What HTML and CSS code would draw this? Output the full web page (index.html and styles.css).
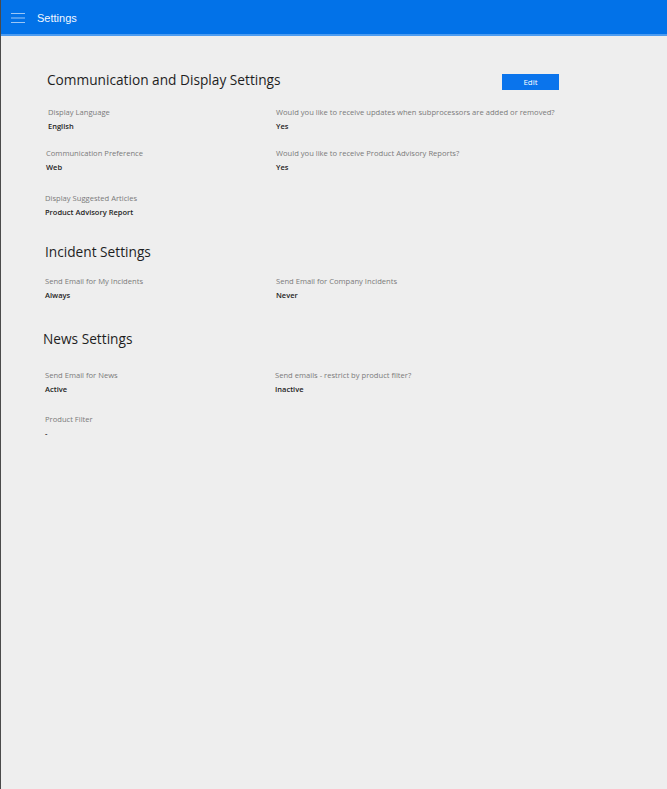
FILE: index.html
```html
<!DOCTYPE html>
<html lang="en">
<head>
<meta charset="utf-8">
<title>Settings</title>
<link rel="stylesheet" href="styles.css">
</head>
<body>
<header class="topbar">
  <svg class="menu-icon" width="14" height="12" viewBox="0 0 14 12" aria-hidden="true">
    <path d="M0 1.5H14M0 6H14M0 10.5H14" stroke="#9cc6f5" stroke-width="1.2" fill="none"/>
  </svg>
  <span class="topbar-title">Settings</span>
</header>
<main class="content">
  <section class="section section-comm">
    <div class="section-head">
      <h2 class="section-title title-comm">Communication and Display Settings</h2>
      <button class="edit-btn" type="button">Edit</button>
    </div>
    <div class="fields">
      <div class="field f-indent3"><div class="label">Display Language</div><div class="value">English</div></div>
      <div class="field"><div class="label">Would you like to receive updates when subprocessors are added or removed?</div><div class="value">Yes</div></div>
      <div class="field f-indent1"><div class="label">Communication Preference</div><div class="value">Web</div></div>
      <div class="field"><div class="label">Would you like to receive Product Advisory Reports?</div><div class="value">Yes</div></div>
      <div class="field field-extra"><div class="label">Display Suggested Articles</div><div class="value">Product Advisory Report</div></div>
    </div>
  </section>
  <section class="section section-incident">
    <h2 class="section-title">Incident Settings</h2>
    <div class="fields">
      <div class="field"><div class="label">Send Email for My Incidents</div><div class="value">Always</div></div>
      <div class="field"><div class="label">Send Email for Company Incidents</div><div class="value">Never</div></div>
    </div>
  </section>
  <section class="section section-news">
    <h2 class="section-title title-news">News Settings</h2>
    <div class="fields fields-news">
      <div class="field"><div class="label">Send Email for News</div><div class="value">Active</div></div>
      <div class="field f-left1"><div class="label">Send emails - restrict by product filter?</div><div class="value">Inactive</div></div>
      <div class="field"><div class="label">Product Filter</div><div class="value">-</div></div>
    </div>
  </section>
</main>
</body>
</html>
```
FILE: styles.css
```css
html, body {
  margin: 0;
  padding: 0;
}
body {
  background: #eeeeee;
  font-family: "Open Sans", "Noto Sans", sans-serif;
  color: #222;
  min-height: 789px;
  border-left: 1px solid #4a4a4a;
  box-sizing: border-box;
}
.topbar {
  height: 34px;
  background: #0272e8;
  border-bottom: 2px solid #4d9cf0;
  display: flex;
  align-items: center;
  padding-left: 10px;
  gap: 12px;
}
.menu-icon {
  display: block;
  margin-top: 1px;
}
.topbar-title {
  color: #f2f7ff;
  font-size: 11px;
  font-family: "Liberation Sans", Arial, sans-serif;
  line-height: 14px;
  padding-top: 1px;
}
.content {
  padding: 34px 108px 0 44px;
}
.section-head {
  display: flex;
  justify-content: space-between;
  align-items: center;
}
.section-title {
  margin: 0;
  font-size: 13.7px;
  line-height: 18px;
  font-weight: 400;
  color: #1e1e1e;
}
.title-comm {
  margin-left: 2px;
}
.title-news {
  margin-left: -2px;
}
.edit-btn {
  width: 57px;
  height: 16px;
  margin-top: 4px;
  padding: 0;
  border: none;
  background: #0a74ec;
  color: #fff;
  font-family: "Open Sans", sans-serif;
  font-size: 8px;
  line-height: 16px;
}
.fields {
  display: grid;
  grid-template-columns: 231px 1fr;
  row-gap: 17px;
  margin-top: 17px;
}
.field {
  min-width: 0;
}
.f-indent3 { padding-left: 3px; }
.f-indent1 { padding-left: 1px; }
.f-left1 { margin-left: -1px; }
.field-extra {
  margin-top: 4px;
}
.label {
  font-size: 7.6px;
  line-height: 10px;
  color: #7a7a7a;
  white-space: nowrap;
}
.value {
  margin-top: 4px;
  font-size: 7.5px;
  line-height: 10px;
  font-weight: 600;
  color: #1e1e1e;
}
.section-incident {
  margin-top: 26px;
}
.section-incident .fields {
  margin-top: 15px;
}
.section-news {
  margin-top: 30px;
}
.fields-news {
  margin-top: 22px;
  row-gap: 20px;
}
```
